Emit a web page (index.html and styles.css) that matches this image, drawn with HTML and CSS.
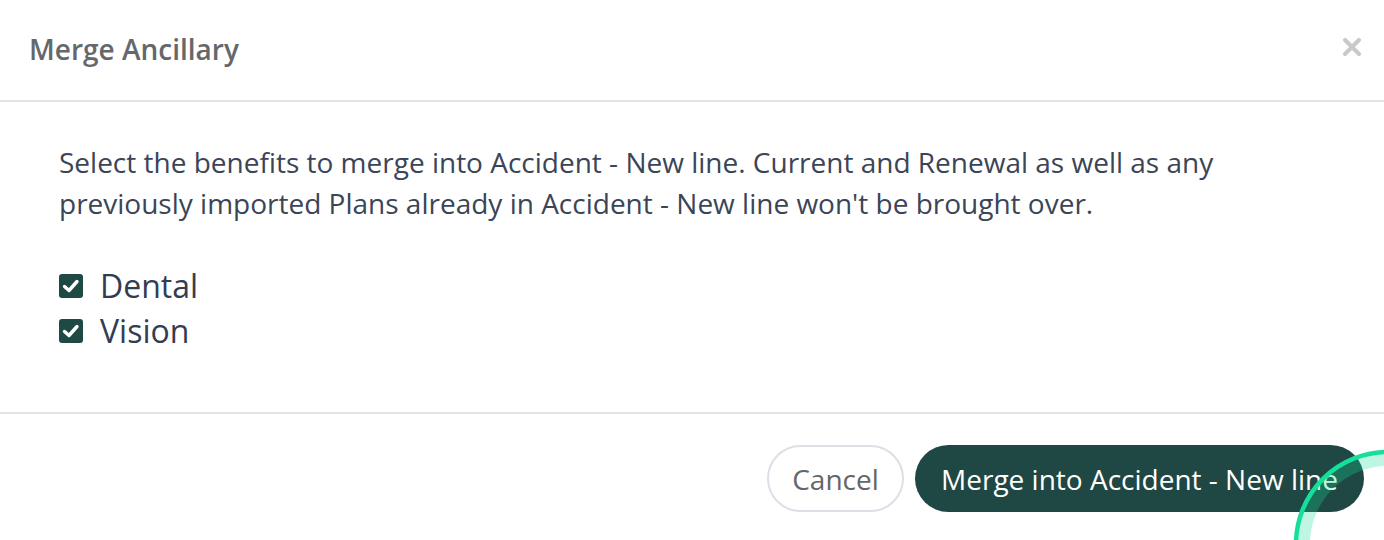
FILE: index.html
```html
<!DOCTYPE html>
<html>
<head>
<meta charset="utf-8">
<link rel="stylesheet" href="styles.css">
</head>
<body>
<div class="modal">
  <div class="modal-header">
    <h2 class="modal-title">Merge Ancillary</h2>
    <button class="close-btn" aria-label="Close">
      <svg width="20" height="20" viewBox="0 0 20 20"><path d="M3 3 L17 17 M17 3 L3 17" stroke="#c9c9c9" stroke-width="4.2" stroke-linecap="round"/></svg>
    </button>
  </div>
  <div class="modal-body">
    <p class="intro">Select the benefits to merge into Accident - New line. Current and Renewal as well as any previously imported Plans already in Accident - New line won't be brought over.</p>
    <div class="options">
      <label class="option"><span class="check"><svg width="24" height="24" viewBox="0 0 24 24"><path d="M5.5 12.5 L10 16.5 L18 7.5" fill="none" stroke="#fff" stroke-width="3.4" stroke-linecap="round" stroke-linejoin="round"/></svg></span><span class="option-label">Dental</span></label>
      <label class="option"><span class="check"><svg width="24" height="24" viewBox="0 0 24 24"><path d="M5.5 12.5 L10 16.5 L18 7.5" fill="none" stroke="#fff" stroke-width="3.4" stroke-linecap="round" stroke-linejoin="round"/></svg></span><span class="option-label">Vision</span></label>
    </div>
  </div>
  <div class="modal-footer">
    <button class="btn btn-cancel">Cancel</button>
    <button class="btn btn-primary">Merge into Accident - New line</button>
  </div>
  <svg class="ring" width="200" height="200" viewBox="0 0 200 200">
    <circle cx="100" cy="100" r="84" fill="none" stroke="rgba(22,224,156,0.28)" stroke-width="12"/>
    <circle cx="100" cy="100" r="92" fill="none" stroke="#16df9b" stroke-width="4.5"/>
  </svg>
</div>
</body>
</html>
```
FILE: styles.css
```css
html, body {
  margin: 0;
  padding: 0;
  background: #ffffff;
  font-family: "Open Sans", "Noto Sans", sans-serif;
}
.modal {
  position: relative;
  width: 1384px;
  height: 540px;
  overflow: hidden;
}
.modal-header {
  height: 102px;
  border-bottom: 2px solid #e3e3e3;
  display: flex;
  align-items: center;
  justify-content: space-between;
  padding: 0 22px 0 29px;
  box-sizing: border-box;
}
.modal-title {
  margin: 0;
  font-size: 28px;
  font-weight: 600;
  color: #65686b;
  line-height: 1;
  padding-bottom: 2px;
}
.close-btn {
  border: 0;
  background: none;
  padding: 0;
  display: flex;
  margin-bottom: 6px;
}
.modal-body {
  padding: 40px 59px 59px;
  color: #3b4558;
}
.intro {
  margin: 0 0 39px;
  font-size: 28px;
  line-height: 41px;
}
.options {
  display: flex;
  flex-direction: column;
}
.option {
  display: flex;
  align-items: center;
  height: 45px;
}
.check {
  width: 24px;
  height: 24px;
  border-radius: 3px;
  background: #1f4944;
  display: flex;
  align-items: center;
  justify-content: center;
  margin-right: 17px;
}
.option-label {
  font-size: 32px;
  color: #323d52;
}
.modal-footer {
  border-top: 2px solid #e3e3e3;
  padding: 31px 20px 0 0;
  display: flex;
  justify-content: flex-end;
  gap: 11px;
}
.btn {
  height: 67px;
  border-radius: 34px;
  font-family: "Open Sans", "Noto Sans", sans-serif;
  font-size: 28px;
  box-sizing: border-box;
  cursor: pointer;
}
.btn-cancel {
  width: 137px;
  background: #fff;
  border: 2px solid #dce0e6;
  color: #646669;
}
.btn-primary {
  width: 449px;
  background: #1f4743;
  border: 0;
  color: #ffffff;
}
.ring {
  position: absolute;
  left: 1288px;
  top: 444px;
}
```
